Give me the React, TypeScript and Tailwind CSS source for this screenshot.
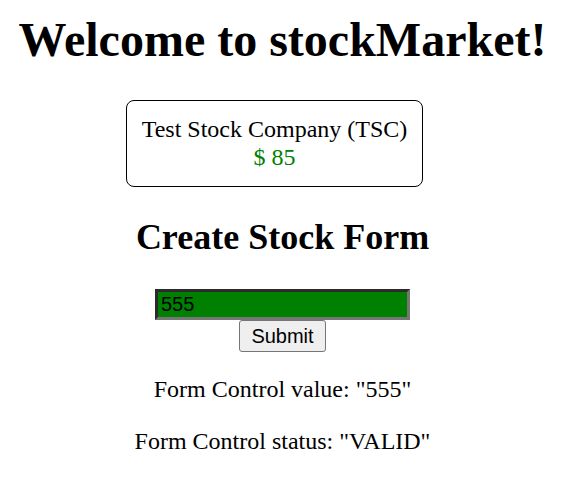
import { useState } from 'react';

export default function App() {
  const [value, setValue] = useState('555');

  return (
    <div className="min-h-screen bg-white text-black text-center font-['Liberation_Serif',serif] pl-3 pr-[29px] pt-3">
      <h1 className="text-[48px] font-bold leading-[55px] mb-[33px]">Welcome to stockMarket!</h1>

      <div className="flex justify-center">
        <div className="border border-black rounded-[8px] px-[15px] py-[15px] mr-[16px] text-[24px] leading-[27.5px] whitespace-nowrap">
          <div>Test Stock Company (TSC)</div>
          <div className="text-[#008000]">$ 85</div>
        </div>
      </div>

      <h2 className="text-[36px] font-bold leading-[41px] mt-[30px] mb-[31px]">Create Stock Form</h2>

      <form className="flex flex-col items-center" onSubmit={(e) => e.preventDefault()}>
        <input
          value={value}
          onChange={(e) => setValue(e.target.value)}
          className="w-[255px] h-[31px] bg-[#008000] text-black text-[20px] font-['Liberation_Sans',sans-serif] px-[3px] border-[3px] border-t-[#2b2b2b] border-l-[#2b2b2b] border-b-[#767676] border-r-[#767676] outline-none"
        />
        <button
          type="submit"
          className="h-[32px] w-[87px] bg-[#efefef] border-[1.5px] border-[#767676] rounded-[3px] text-[20px] font-['Liberation_Sans',sans-serif] leading-[23px]"
        >
          Submit
        </button>
      </form>

      <p className="text-[24px] leading-[27.5px] mt-[24px]">Form Control value: "{value}"</p>
      <p className="text-[24px] leading-[27.5px] mt-[24px]">Form Control status: "VALID"</p>
    </div>
  );
}
